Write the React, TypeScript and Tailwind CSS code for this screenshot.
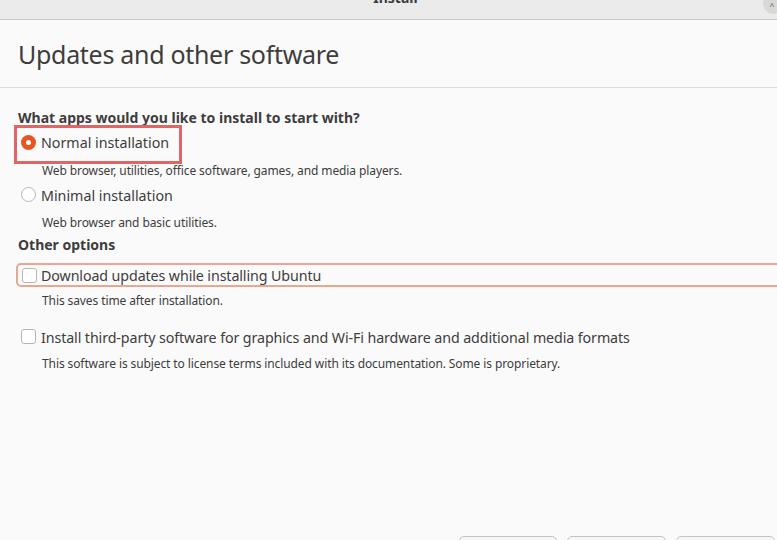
import React from "react";

function Radio({ checked }: { checked?: boolean }) {
  return checked ? (
    <span className="w-[15px] h-[15px] rounded-full bg-[#e95420] flex items-center justify-center shrink-0">
      <span className="w-[5px] h-[5px] rounded-full bg-white" />
    </span>
  ) : (
    <span className="w-[15px] h-[15px] rounded-full border border-[#b6b6b3] bg-white shrink-0" />
  );
}

function Check() {
  return <span className="w-[15px] h-[15px] rounded-[3px] border border-[#b6b6b3] bg-white shrink-0" />;
}

export default function App() {
  return (
    <div className="w-[777px] h-[540px] bg-[#fafafa] overflow-hidden relative flex flex-col text-[#3d3d3d] font-['Noto_Sans',sans-serif]">
      {/* title bar */}
      <div className="h-[20px] shrink-0 bg-[#ebebeb] border-b border-[#c9c9c7] relative flex justify-center overflow-hidden">
        <span className="text-[14px] font-bold leading-[14px] -mt-[9px] ml-[14px] text-[#3d3d3d]">Install</span>
        <span className="absolute left-[763px] -top-[8px] w-[22px] h-[22px] rounded-full bg-[#d9d9d7] flex items-center justify-center">
          <span className="text-[8px] leading-none mt-[6px] -ml-[4px] text-[#555]">^</span>
        </span>
      </div>

      {/* heading */}
      <div className="h-[68px] shrink-0 flex items-center pl-[18px] border-b border-[#dcdcda]">
        <h1 className="text-[25px] leading-none text-[#3d3d3d] mt-[1px] tracking-[-0.3px]">Updates and other software</h1>
      </div>

      <div className="flex flex-col pl-[18px] pt-[19px] relative">
        <div className="h-[20px] flex items-center font-bold text-[14px]">What apps would you like to install to start with?</div>

        <div className="h-[30px] flex items-center gap-[5px] pl-[3px]">
          <Radio checked />
          <span className="text-[14.25px] pt-[2px]">Normal installation</span>
        </div>
        <div className="h-[24px] flex items-center pl-[24px] pt-[4px] text-[12px] tracking-[-0.1px]">Web browser, utilities, office software, games, and media players.</div>

        <div className="h-[26px] flex items-center gap-[5px] pl-[3px]">
          <Radio />
          <span className="text-[14.25px] pt-[3px]">Minimal installation</span>
        </div>
        <div className="h-[28px] flex items-center pl-[24px] pt-[4px] text-[12px] tracking-[-0.1px]">Web browser and basic utilities.</div>

        <div className="h-[18px] flex items-center font-bold text-[14px]">Other options</div>

        <div className="mt-[10px] h-[24px] -ml-[2px] w-[800px] rounded-[5px] border-2 border-[#e6a891] flex items-center gap-[4px] pl-[4px]">
          <Check />
          <span className="text-[14.25px] pt-[2px] tracking-[-0.1px]">Download updates while installing Ubuntu</span>
        </div>
        <div className="h-[25px] flex items-center pl-[24px] pt-[2px] text-[12px] tracking-[-0.1px]">This saves time after installation.</div>

        <div className="mt-[12px] h-[24px] flex items-center gap-[5px] pl-[3px]">
          <Check />
          <span className="text-[14.25px] pt-[3px] tracking-[-0.1px]">Install third-party software for graphics and Wi-Fi hardware and additional media formats</span>
        </div>
        <div className="h-[28px] flex items-center pl-[24px] pt-[4px] text-[12px] tracking-[-0.1px]">This software is subject to license terms included with its documentation. Some is proprietary.</div>

        {/* annotation highlight */}
        <div className="absolute left-[14px] top-[37px] w-[168px] h-[39px] border-[3px] border-[#e06666] pointer-events-none" />
      </div>

      <div className="flex-1" />
      <div className="h-[4px] shrink-0 flex justify-end gap-[10px] pr-[2px] overflow-visible">
        <div className="w-[98px] h-[30px] shrink-0 rounded-[5px] border border-[#c4c4c2] bg-[#f6f6f5]" />
        <div className="w-[99px] h-[30px] shrink-0 rounded-[5px] border border-[#c4c4c2] bg-[#f6f6f5]" />
        <div className="w-[99px] h-[30px] shrink-0 rounded-[5px] border border-[#c4c4c2] bg-[#f6f6f5]" />
      </div>
    </div>
  );
}
